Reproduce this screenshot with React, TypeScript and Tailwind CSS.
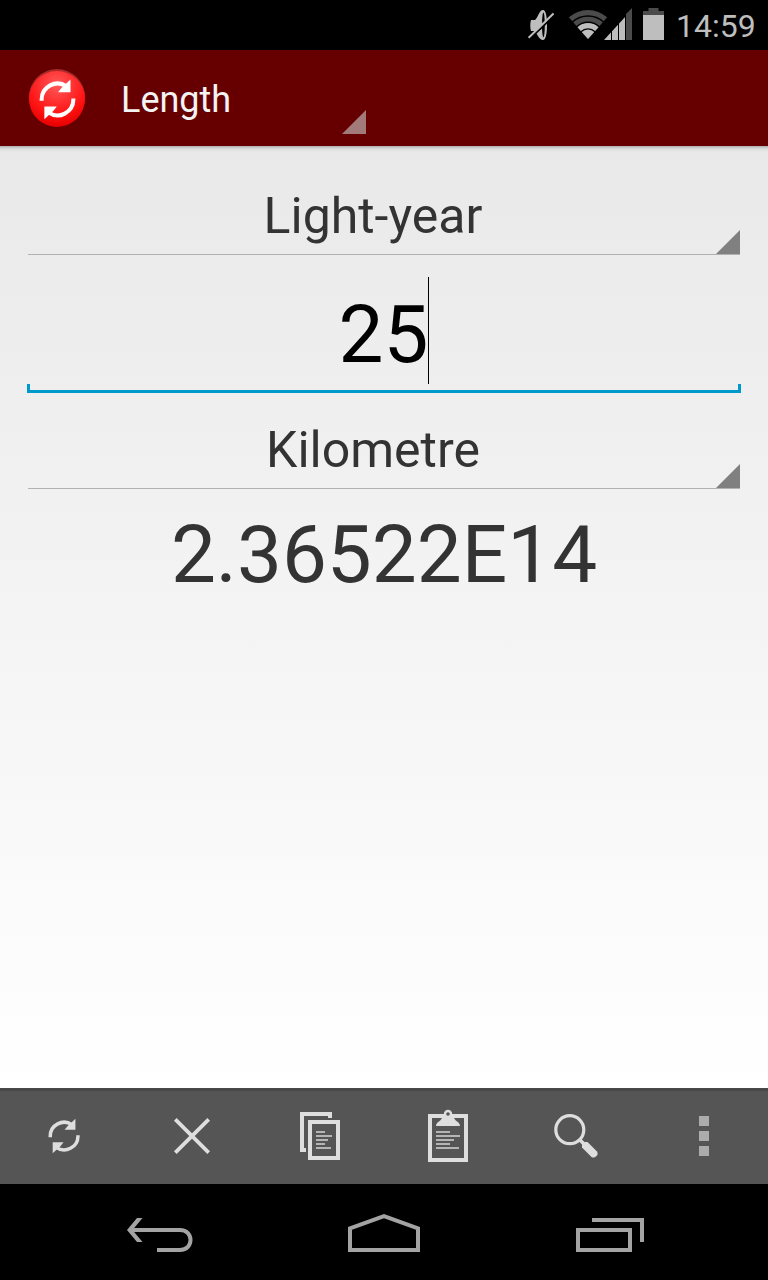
import type { ReactNode } from "react";

const SyncArrows = () => (
  <>
    <path d="M2 19V18A14.3 14.3 0 0 1 24.5 6.3" fill="none" stroke="currentColor" strokeWidth="3.6" />
    <path d="M28 0V11.5H16.8L20 7.5Z" fill="currentColor" />
    <path d="M30.6 17V18A14.3 14.3 0 0 1 8.1 29.5" fill="none" stroke="currentColor" strokeWidth="3.6" />
    <path d="M4.5 35.5V24.3H15.7L12.5 28.3Z" fill="currentColor" />
  </>
);

const StatusBar = () => (
  <div className="flex h-[50px] items-start bg-black pl-[528px] text-[#bebebe]">
    <svg className="mt-2 h-[34px] w-[26px]" viewBox="0 0 26 34">
      <path d="M3 12H7C10 10 11 2 15 2C18 2 19 9 19 17S18 32 15 32C11 32 10 26 6 23H3C2 20 2 15 3 12Z" fill="currentColor" />
      <ellipse cx="15.4" cy="17" rx="1.4" ry="12.5" fill="#000" />
      <path d="M12.5 13C15 13 15 21 12.5 21Z" fill="currentColor" />
      <path d="M0 32.5L26 7.5" stroke="#000" strokeWidth="2" />
      <path d="M0.6 29.8L25.5 5.5" stroke="currentColor" strokeWidth="2" />
    </svg>
    <svg className="ml-[14px] mt-2 h-[34px] w-[40px]" viewBox="0 0 40 34">
      <path d="M20 31L0.8 9.3A29 29 0 0 1 39.2 9.3Z" fill="#4b4b4b" />
      <path d="M20 31L9.3 18.9A16.2 16.2 0 0 1 30.7 18.9Z" fill="currentColor" />
      <g fill="none" stroke="#000" strokeWidth="1.4">
        <path d="M4.4 14.1A22.8 22.8 0 0 1 35.6 14.1" />
        <path d="M8.6 18.9A16.4 16.4 0 0 1 31.4 18.9" />
        <path d="M13 23.7A10 10 0 0 1 27 23.7" />
      </g>
    </svg>
    <svg className="-ml-[4px] mt-2 h-8 w-7" viewBox="0 0 28 32">
      <path d="M0 32L22 8V32Z" fill="currentColor" />
      <path d="M22 6L28 0V32H22Z" fill="#4b4b4b" />
      <path d="M7.5 20V32M14.5 12V32M21.5 5V32" stroke="#000" strokeWidth="1" />
    </svg>
    <svg className="ml-[11px] mt-2 h-8 w-[21px]" viewBox="0 0 21 32">
      <path d="M0 3H5.5V0H15.5V3H21V7H0Z" fill="#4b4b4b" />
      <path d="M0 7H21V32H0Z" fill="currentColor" />
    </svg>
    <span className="ml-[12px] mt-[7px] text-[32px] leading-[38px]">14:59</span>
  </div>
);

const ActionBar = () => (
  <header className="flex h-24 items-start bg-[#660000]">
    <svg className="ml-7 mt-[18px] h-[60px] w-[58px]" viewBox="0 0 58 60">
      <defs>
        <radialGradient id="ball" cx="0.5" cy="0.25" r="0.75">
          <stop offset="0" stopColor="#ff5a5a" />
          <stop offset="0.7" stopColor="#ff1212" />
          <stop offset="1" stopColor="#e60000" />
        </radialGradient>
      </defs>
      <circle cx="29" cy="29" r="28" fill="#a82a2a" />
      <circle cx="29" cy="31" r="28" fill="url(#ball)" />
      <g transform="translate(11.4 11.4) scale(1.11 1.12)" className="text-white">
        <SyncArrows />
      </g>
    </svg>
    <div className="ml-[35px] flex w-[245px] justify-between">
      <h1 className="mt-[29px] text-[36px] leading-[42px] text-[#f3f3f3]">Length</h1>
      <svg className="mt-[60px] size-6" viewBox="0 0 24 24">
        <path d="M24 0V24H0Z" fill="#a37a7a" />
      </svg>
    </div>
  </header>
);

const UnitSpinner = ({ label }: { label: string }) => (
  <div className="flex h-[62px] border-b border-[#b2b2b2]">
    <span className="flex-1 pl-[2px] text-center text-[50px] leading-[46px]">{label}</span>
    <svg className="mt-[37px] size-6" viewBox="0 0 24 24">
      <path d="M24 0V24H0Z" fill="#808080" />
    </svg>
  </div>
);

const Action = ({ children }: { children: ReactNode }) => (
  <button className="flex h-full flex-1 items-center justify-center">
    <svg className="size-16" viewBox="0 0 64 64">
      {children}
    </svg>
  </button>
);

const BottomBar = () => (
  <div className="flex h-24 border-t-[3px] border-[#484848] bg-[#555555] pb-[3px] text-[#dedede]">
    <Action>
      <g transform="translate(16.3 14.7) scale(0.97)">
        <SyncArrows />
      </g>
    </Action>
    <Action>
      <path d="M15.3 15.3L48.7 48.7M48.7 15.3L15.3 48.7" stroke="currentColor" strokeWidth="3.8" />
    </Action>
    <Action>
      <path d="M12 8H44V14H40V12H16V44H18V48H12Z" fill="currentColor" />
      <path d="M22 18H50V54H22Z" fill="none" stroke="currentColor" strokeWidth="4" />
      <path d="M28 28H37M28 32H44M28 36H40M28 40H37M28 44H43" stroke="#b4b4b4" strokeWidth="2" />
    </Action>
    <Action>
      <path d="M14 12H50V56H14Z" fill="none" stroke="currentColor" strokeWidth="4" />
      <path d="M20 22C20 18 24 18 26 14H38C40 18 44 18 44 22Z" fill="currentColor" />
      <circle cx="32" cy="10" r="3" fill="#555" stroke="currentColor" strokeWidth="2.4" />
      <path d="M20 28H34M20 32H44M20 36H38M20 40H34M20 44H43" stroke="#b4b4b4" strokeWidth="2" />
    </Action>
    <Action>
      <circle cx="25.8" cy="25.7" r="14" fill="none" stroke="currentColor" strokeWidth="3.2" />
      <path d="M35 35L41 41" stroke="currentColor" strokeWidth="3.5" />
      <path d="M40.5 38L43.5 38L53 47.5Q54.5 50 52.5 52Q50 54.5 47.5 53L38 43.5V40.5Z" fill="currentColor" />
    </Action>
    <Action>
      <path d="M27 12H37V22H27ZM27 27H37V37H27ZM27 42H37V52H27Z" fill="#acacac" />
    </Action>
  </div>
);

const NavBar = () => (
  <nav className="flex h-24 items-start bg-black text-[#a3a3a3]">
    <svg className="ml-[126px] mt-[34px] h-[34px] w-[68px]" viewBox="0 0 68 34">
      <path d="M5 12H54C68 12 68 32 54 32H31" fill="none" stroke="currentColor" strokeWidth="4" />
      <path d="M11 0H16.5L6.5 12L16.5 24H11L1 12Z" fill="currentColor" />
    </svg>
    <svg className="ml-[154px] mt-[30px] h-[38px] w-[72px]" viewBox="0 0 72 38" fill="none" stroke="currentColor">
      <path d="M2 14.3L36 2.2L70 14.3V36H2Z" strokeWidth="4" />
    </svg>
    <svg className="ml-[156px] mt-[34px] h-[34px] w-[68px]" viewBox="0 0 68 34" fill="none" stroke="currentColor">
      <path d="M16 2H66V24M2 12H54V32H2Z" strokeWidth="4" />
    </svg>
  </nav>
);

export default function App() {
  return (
    <div className="flex h-[1280px] w-[768px] flex-col font-[Roboto,sans-serif] text-[#333333]">
      <StatusBar />
      <ActionBar />
      <main className="flex-1 bg-linear-to-b from-[#e9e9e9] to-white px-7">
        <div className="-mx-7 h-[6px] bg-linear-to-b from-black/25 via-black/5 to-transparent" />
        <div className="mt-[41px]">
          <UnitSpinner label="Light-year" />
        </div>
        <div className="-mx-px mt-[22px] flex h-[107px] justify-center text-[80px] leading-[117px] text-black">
          <span>25</span>
          <span className="h-full w-px bg-black" />
        </div>
        <div className="-mx-px h-[9px] border-x-[3px] border-b-[3px] border-[#0099cc]" />
        <div className="mt-[34px]">
          <UnitSpinner label="Kilometre" />
        </div>
        <div className="mt-[19px] text-center text-[80px] leading-[94px]">2.36522E14</div>
      </main>
      <BottomBar />
      <NavBar />
    </div>
  );
}
